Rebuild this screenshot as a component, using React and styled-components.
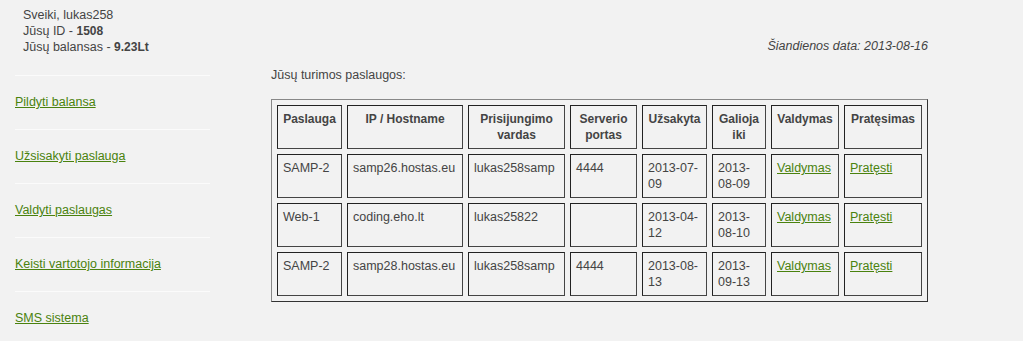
import React from 'react';
import styled, { createGlobalStyle } from 'styled-components';

const GlobalStyle = createGlobalStyle`
  body {
    margin: 0;
    background: #f2f2f2;
    font-family: "Liberation Sans", Arial, sans-serif;
    font-size: 12.5px;
    line-height: 16px;
    color: #444;
  }
`

const navLinks = [
  'Pildyti balansa',
  'Užsisakyti paslauga',
  'Valdyti paslaugas',
  'Keisti vartotojo informacija',
  'SMS sistema',
];

const services = [
  { type: 'SAMP-2', host: 'samp26.hostas.eu', user: 'lukas258samp', port: '4444', ordered: '2013-07-09', valid: '2013-08-09' },
  { type: 'Web-1', host: 'coding.eho.lt', user: 'lukas25822', port: '', ordered: '2013-04-12', valid: '2013-08-10' },
  { type: 'SAMP-2', host: 'samp28.hostas.eu', user: 'lukas258samp', port: '4444', ordered: '2013-08-13', valid: '2013-09-13' },
];

const columns = [
  { title: 'Paslauga', width: 65 },
  { title: 'IP / Hostname', width: 116 },
  { title: 'Prisijungimo vardas', width: 97 },
  { title: 'Serverio portas', width: 67 },
  { title: 'Užsakyta', width: 65 },
  { title: 'Galioja iki', width: 54 },
  { title: 'Valdymas', width: 68 },
  { title: 'Pratęsimas', width: 78 },
];

const App = () => {
  return (
    <>
      <GlobalStyle />
      <Page>
        <Sidebar>
          <Greeting>
            <div>Sveiki, lukas258</div>
            <div>Jūsų ID - <b>1508</b></div>
            <div>Jūsų balansas - <b>9.23Lt</b></div>
          </Greeting>
          {navLinks.map((label) => (
            <NavItem key={label}>
              <Link href="#">{label}</Link>
            </NavItem>
          ))}
        </Sidebar>
        <Main>
          <DateLine>Šiandienos data: 2013-08-16</DateLine>
          <Title>Jūsų turimos paslaugos:</Title>
          <Table>
            <colgroup>
              {columns.map((c) => (
                <col key={c.title} style={{ width: c.width }} />
              ))}
            </colgroup>
            <thead>
              <tr>
                {columns.map((c) => (
                  <Th key={c.title}>{c.title}</Th>
                ))}
              </tr>
            </thead>
            <tbody>
              {services.map((s, i) => (
                <tr key={i}>
                  <Td>{s.type}</Td>
                  <Td>{s.host}</Td>
                  <Td>{s.user}</Td>
                  <Td>{s.port}</Td>
                  <Td>{s.ordered}</Td>
                  <Td>{s.valid}</Td>
                  <Td><Link href="#">Valdymas</Link></Td>
                  <Td><Link href="#">Pratęsti</Link></Td>
                </tr>
              ))}
            </tbody>
          </Table>
        </Main>
      </Page>
    </>
  );
};

const Page = styled.div`
  display: flex;
  align-items: flex-start;
  padding-left: 15px;
  width: 1023px;
  height: 341px;
  box-sizing: border-box;
  overflow: hidden;
`

const Sidebar = styled.aside`
  width: 195px;
  flex-shrink: 0;
`

const Greeting = styled.div`
  padding: 7px 8px 20px;

  b {
    font-size: 12px;
  }
`

const NavItem = styled.div`
  border-top: 1px solid #fbfbfb;
  padding: 18px 0 19px;
`

const Link = styled.a`
  color: #4a820e;
  text-decoration: underline;
`

const Main = styled.main`
  margin-left: 61px;
  width: 657px;
`

const DateLine = styled.div`
  margin-top: 38px;
  text-align: right;
  font-style: italic;
`

const Title = styled.div`
  margin-top: 13px;
`

const Table = styled.table`
  margin-top: 16px;
  width: 657px;
  table-layout: fixed;
  border-collapse: separate;
  border-spacing: 5px;
  border: 1px solid;
  border-color: #888 #333 #333 #888;
`

const Th = styled.th`
  box-sizing: border-box;
  padding: 5px;
  height: 44px;
  vertical-align: top;
  text-align: center;
  font-size: 12px;
  font-weight: bold;
  border: 1px solid;
  border-color: #222 #444 #444 #222;
`

const Td = styled.td`
  box-sizing: border-box;
  padding: 5px;
  height: 44px;
  vertical-align: top;
  text-align: left;
  border: 1px solid;
  border-color: #222 #444 #444 #222;
`

export default App;
